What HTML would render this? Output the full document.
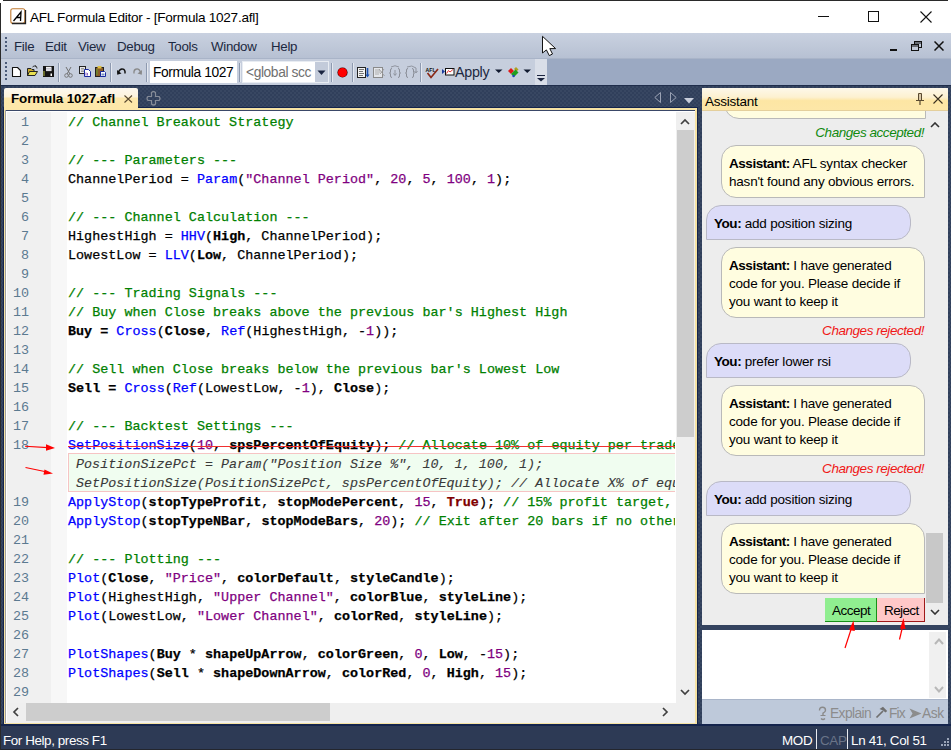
<!DOCTYPE html>
<html><head><meta charset="utf-8">
<style>
*{box-sizing:border-box;margin:0;padding:0}
html,body{width:951px;height:750px;overflow:hidden;background:#34435f conic-gradient(#384762 25%,#303f5b 0 50%,#384762 0 75%,#303f5b 0) 0 0/4px 4px;font-family:"Liberation Sans",sans-serif}
.a{position:absolute}
.t{position:absolute;white-space:pre;line-height:1}
#title{left:0;top:0;width:951px;height:33px;background:#fff}
#menubar{left:0;top:33px;width:951px;height:26px;background:linear-gradient(#c9d1e0,#b6c0d2)}
#toolrow{left:0;top:59px;width:951px;height:26px;background:#9ba9c2}
#toolbar{left:1px;top:59px;width:546px;height:26px;background:#c6cedd}
.sep{position:absolute;top:63px;width:1px;height:19px;background:#8e9ab0;box-shadow:1px 0 0 #e4e8f0}
.code{position:absolute;left:1px;font-family:"Liberation Mono",monospace;font-size:13.4px;letter-spacing:0.02px;-webkit-text-stroke:0.25px currentColor;line-height:19px;white-space:pre;color:#000}
.ln{position:absolute;left:6px;width:23px;text-align:right;font-family:"Liberation Mono",monospace;font-size:13.4px;line-height:19px;color:#5b7a90}
.c{color:#008000}.f{color:#0000ff}.n{color:#800080}.b{font-weight:bold}.k{color:#800000;font-weight:bold}
.bub{position:absolute;font-size:13.5px;letter-spacing:-0.2px;line-height:18px;color:#000;padding:9px 0 0 7px}
.bub b{letter-spacing:-0.45px}
.ya{left:721px;width:204px;background:#fffde0;border:1px solid #b9b9b9;border-radius:15px 15px 0 15px}
.yu{left:706px;width:205px;background:#dcdcf8;border:1px solid #b9b9c6;border-radius:15px 15px 15px 0}
.st{position:absolute;right:27px;font-size:13.5px;letter-spacing:-0.45px;font-style:italic;white-space:pre;line-height:1}
</style></head><body>
<!-- window frame -->
<div id="title" class="a"></div>
<!-- app icon -->
<svg class="a" style="left:10px;top:8px" width="17" height="17"><rect x="0.8" y="0.8" width="14" height="14.5" rx="2" fill="#fff" stroke="#c07a30" stroke-width="1.1"/><path d="M2 15.5H15.5V2" fill="none" stroke="#222" stroke-width="1.3"/><path d="M3.5 13L11 4L10.5 13M6 9.5H11" fill="none" stroke="#000" stroke-width="1.3"/></svg>
<div class="t" style="left:30px;top:10.5px;font-size:13.6px;letter-spacing:-0.27px;color:#000">AFL Formula Editor - [Formula 1027.afl]</div>
<!-- window buttons -->
<div class="a" style="left:818px;top:16px;width:11px;height:1px;background:#111"></div>
<div class="a" style="left:868px;top:11px;width:11px;height:11px;border:1px solid #111"></div>
<svg class="a" style="left:920px;top:11px" width="12" height="12"><path d="M0.5 0.5L11.5 11.5M11.5 0.5L0.5 11.5" stroke="#111" stroke-width="1.1"/></svg>

<!-- menubar -->
<div id="menubar" class="a"></div>
<div class="a" style="left:1px;top:58px;width:950px;height:1px;background:#a9b4c8"></div>
<div class="t" style="left:14px;top:40px;font-size:13.3px;letter-spacing:-0.3px;color:#1c2840">File</div>
<div class="t" style="left:45px;top:40px;font-size:13.3px;letter-spacing:-0.3px;color:#1c2840">Edit</div>
<div class="t" style="left:78px;top:40px;font-size:13.3px;letter-spacing:-0.3px;color:#1c2840">View</div>
<div class="t" style="left:117px;top:40px;font-size:13.3px;letter-spacing:-0.3px;color:#1c2840">Debug</div>
<div class="t" style="left:168px;top:40px;font-size:13.3px;letter-spacing:-0.3px;color:#1c2840">Tools</div>
<div class="t" style="left:211px;top:40px;font-size:13.3px;letter-spacing:-0.3px;color:#1c2840">Window</div>
<div class="t" style="left:271px;top:40px;font-size:13.3px;letter-spacing:-0.3px;color:#1c2840">Help</div>

<!-- toolbar -->
<div id="toolrow" class="a"></div>
<div id="toolbar" class="a"></div>
<div class="a" style="left:0;top:85px;width:951px;height:1px;background:#1f2d4b"></div>

<!-- grippers -->
<div class="a" style="left:5px;top:37px;width:2px;height:16px;background:repeating-linear-gradient(#4a5a78 0 2px,transparent 2px 4px)"></div>
<div class="a" style="left:5px;top:62px;width:2px;height:18px;background:repeating-linear-gradient(#4a5a78 0 2px,transparent 2px 4px)"></div>
<!-- new -->
<svg class="a" style="left:0;top:56px" width="560" height="30">
<path d="M12.5 11.5H17.5L20.5 14.5V20.5H12.5Z" fill="#fff" stroke="#111" stroke-width="1.1" stroke-linejoin="round"/>
<!-- open -->
<path d="M27.5 12.5H31L32 13.5H34V19.5H27.5Z" fill="#c8a830" stroke="#222"/>
<path d="M27.5 19.5L29.5 15.5H37.5L35 19.5Z" fill="#e8e050" stroke="#222"/>
<path d="M32.5 11Q34 9 36 10.5M35 9.5L36.5 10.5L37 12.5" fill="none" stroke="#333" stroke-width="1"/>
<!-- save -->
<rect x="43" y="10" width="11" height="11" fill="#151515"/>
<rect x="46" y="10.8" width="5.5" height="4.3" fill="#f4f4f4"/>
<path d="M46 12.5H51.5M46 14H51.5" stroke="#aab" stroke-width="0.6"/>
<rect x="43.5" y="15" width="1" height="5" fill="#b8c040"/>
<rect x="50.5" y="17.5" width="1.5" height="2.5" fill="#fff"/>
<!-- cut -->
<path d="M66 11L70 18M71 11L67 18" stroke="#707070" stroke-width="1"/>
<circle cx="66.5" cy="19.5" r="1.8" fill="none" stroke="#707070" stroke-width="0.9"/>
<circle cx="70.5" cy="19.5" r="1.8" fill="none" stroke="#707070" stroke-width="0.9"/>
<!-- copy -->
<rect x="79.5" y="10.5" width="6" height="7" fill="#e8e8e8" stroke="#222"/>
<path d="M81 12.5H84M81 14H84M81 15.5H84" stroke="#666" stroke-width="0.6"/>
<path d="M84.5 13.5H88.5L90.5 15.5V20.5H84.5Z" fill="#fff" stroke="#1a2aa0"/>
<path d="M86 16.5V19.5M87.5 17V19.5" stroke="#7040b0" stroke-width="0.8"/>
<!-- paste -->
<rect x="95.5" y="11.5" width="8" height="9" fill="#8a5a28" stroke="#222"/>
<rect x="97.5" y="10" width="4" height="2.5" fill="#e0c040"/>
<rect x="96.5" y="13" width="1" height="6" fill="#60a030"/>
<path d="M100.5 15.5H104.5L105.5 16.5V20.5H100.5Z" fill="#fff" stroke="#1a2aa0"/>
<rect x="101.5" y="17.5" width="3" height="2" fill="#7890c0"/>
<!-- undo -->
<path d="M118.5 16Q120 12.5 122.5 13Q125.5 13.5 125 17.5" fill="none" stroke="#111" stroke-width="1.5"/>
<path d="M117 14L117.2 18.8L121.5 17.6Z" fill="#111"/>
<!-- redo -->
<path d="M140.5 16Q139 12.5 136.5 13Q133.5 13.5 134 17.5" fill="none" stroke="#888" stroke-width="1.3"/>
<path d="M142 14L141.8 18.8L137.5 17.6Z" fill="#888"/>
</svg>
<div class="sep" style="left:58px"></div>
<div class="sep" style="left:110px"></div>
<div class="sep" style="left:146px"></div>
<!-- formula combo -->
<div class="a" style="left:150px;top:61px;width:87px;height:22px;background:#fff"></div>
<div class="t" style="left:153px;top:66px;font-size:13.8px;letter-spacing:-0.4px;color:#000">Formula 1027</div>
<div class="sep" style="left:239px"></div>
<div class="a" style="left:242px;top:61px;width:87px;height:22px;background:#fff;border:1px solid #e8ecf2"></div>
<div class="t" style="left:246px;top:66px;font-size:13.8px;letter-spacing:-0.4px;color:#707070">&lt;global scc</div>
<div class="a" style="left:315px;top:62px;width:13px;height:20px;background:#c3cbda"></div>
<svg class="a" style="left:317px;top:70px" width="9" height="6"><path d="M0.5 0.5H8.5L4.5 5Z" fill="#1a2440"/></svg>
<div class="sep" style="left:331px"></div>
<div class="a" style="left:337.5px;top:68px;width:9px;height:9px;border-radius:50%;background:#f00;box-shadow:0 0 0 0.6px #400"></div>
<div class="sep" style="left:352px"></div>
<svg class="a" style="left:350px;top:56px" width="220" height="30">
<!-- debug icon 1 -->
<rect x="7.5" y="11.5" width="8" height="10" fill="#f4f4f4" stroke="#222"/>
<path d="M9 13.5H14M9 15.5H13M9 17.5H14M9 19.5H13" stroke="#555" stroke-width="0.8"/>
<path d="M17.5 12V20" stroke="#1a50b0" stroke-width="1.6"/><path d="M15.5 18.5H19.5L17.5 21.5Z" fill="#1a50b0"/>
<!-- debug icon 2 -->
<rect x="23.5" y="11.5" width="9" height="10" fill="#e4e6ea" stroke="#8a8a8a"/>
<path d="M25 14H30M25 16H30M25 18H29" stroke="#a0a0a0" stroke-width="0.8"/>
<path d="M29 13L34.5 20M34 13L30 18" stroke="#9a9a9a" stroke-width="0.9"/>
<!-- braces 1 -->
<path d="M42 12.5Q40.5 12.5 40.5 14V16Q40.5 17 39.5 17Q40.5 17 40.5 18V20Q40.5 21.5 42 21.5M48 12.5Q49.5 12.5 49.5 14V16Q49.5 17 50.5 17Q49.5 17 49.5 18V20Q49.5 21.5 48 21.5" fill="none" stroke="#8a8e98" stroke-width="1"/>
<path d="M45 14V19M43.5 17.5L45 19.5L46.5 17.5" fill="none" stroke="#8a8e98" stroke-width="0.9"/>
<path d="M41 11Q45 8.5 49 11" fill="none" stroke="#8a8e98" stroke-width="0.9"/>
<!-- braces 2 -->
<path d="M58 12.5Q56.5 12.5 56.5 14V16Q56.5 17 55.5 17Q56.5 17 56.5 18V20Q56.5 21.5 58 21.5M62 12.5Q63.5 12.5 63.5 14V16Q63.5 17 64.5 17Q63.5 17 63.5 18V20Q63.5 21.5 62 21.5" fill="none" stroke="#8a8e98" stroke-width="1"/>
<path d="M57 11Q62 8.5 66 12V16M64.5 15L66 17L67.5 15" fill="none" stroke="#8a8e98" stroke-width="0.9"/>
<!-- AFL check -->
<text x="75.5" y="15.5" font-family="Liberation Sans" font-size="5.2" font-weight="bold" fill="#111">AFL</text>
<path d="M77.5 17L81 21.5L88 13" fill="none" stroke="#8a2a18" stroke-width="1.7"/>
<!-- apply icon -->
<path d="M92 13L95 15.5L92 18Z" fill="#1a3aa0"/>
<rect x="95.5" y="12.5" width="8.5" height="6.5" fill="#fff" stroke="#111"/>
<path d="M96.5 17.5L98.5 14.5L100 16L103 13.5" fill="none" stroke="#e02020" stroke-width="0.9"/>
<!-- dropdown 1 -->
<path d="M145 13.5H152.5L148.75 17Z" fill="#111a30"/>
<!-- color icon -->
<path d="M158 15L161 12L164 15L161 18Z" fill="#e01818"/>
<path d="M164 13L166 11L168.5 13.5L166.5 15.5Z" fill="#b0a020"/>
<path d="M161 18L165.5 13.5L168.5 16.5L164 21Z" fill="#20a020"/>
<circle cx="163.5" cy="20" r="1.2" fill="#2040c0"/>
<!-- dropdown 2 -->
<path d="M173.5 13.5H181L177.25 17Z" fill="#111a30"/>
</svg>
<div class="sep" style="left:420px"></div>
<div class="t" style="left:455px;top:64.5px;font-size:14.3px;letter-spacing:-0.3px;color:#1c2840">Apply</div>
<div class="a" style="left:535px;top:59px;width:12px;height:26px;background:#d9dee8"></div>
<svg class="a" style="left:537px;top:75px" width="8" height="7"><path d="M0 0.5H8" stroke="#1a2440"/><path d="M0 3H8L4 6.5Z" fill="#1a2440"/></svg>
<!-- MDI buttons -->
<div class="a" style="left:890px;top:49px;width:7px;height:2px;background:#111"></div>
<svg class="a" style="left:911px;top:41px" width="11" height="10"><rect x="3.5" y="0.5" width="7" height="6" fill="none" stroke="#111"/><rect x="0.5" y="3.5" width="7" height="6" fill="#c3cbda" stroke="#111"/><path d="M1 5H7M4 2H10" stroke="#111"/></svg>
<svg class="a" style="left:934px;top:41px" width="10" height="10"><path d="M0.5 0.5L9.5 9.5M9.5 0.5L0.5 9.5" stroke="#111" stroke-width="1.5"/></svg>
<!-- mouse cursor -->
<svg class="a" style="left:541px;top:35px" width="17" height="23"><path d="M1.5 1.3V18L5.4 14.9L8.3 20.6L11.5 19L8.8 13.6H14.6Z" fill="#fff" stroke="#111" stroke-width="1" stroke-linejoin="miter"/></svg>


<!-- tab nav -->
<svg class="a" style="left:654px;top:92px" width="8" height="11"><path d="M6.5 0.5V10.5L0.8 5.5Z" fill="none" stroke="#9aa2b4"/></svg>
<svg class="a" style="left:670px;top:92px" width="8" height="11"><path d="M0.5 0.5V10.5L6.2 5.5Z" fill="none" stroke="#9aa2b4"/></svg>
<svg class="a" style="left:684px;top:98px" width="10" height="6"><path d="M0 0H10L5 5.5Z" fill="#c8cedc"/></svg>
<!-- editor frame -->
<div class="a" style="left:3px;top:107px;width:695px;height:618px;background:#14244c"></div>
<div class="a" style="left:4px;top:108px;width:693px;height:616px;background:#f6e3a4"></div>
<div class="a" style="left:5px;top:110px;width:690px;height:613px;background:#fff"></div>
<div class="a" style="left:5px;top:110px;width:690px;height:1px;background:#3a4868"></div>
<div class="a" style="left:5px;top:110px;width:1px;height:613px;background:#a0a0a0"></div>
<div class="a" style="left:7px;top:112px;width:44px;height:591px;background:#f0f0f0"></div>
<div class="a" style="left:51px;top:112px;width:16px;height:591px;background:#f7f7f7"></div>
<!-- tab -->
<div class="a" style="left:4px;top:88px;width:134px;height:22px;background:linear-gradient(#fdf8ee,#fdf3dc 40%,#fde8ac 46%,#fde7a8);border-radius:2px 2px 0 0"></div>
<div class="t" style="left:11px;top:92px;font-size:13.4px;font-weight:bold;letter-spacing:-0.1px;color:#000">Formula 1027.afl</div>
<svg class="a" style="left:124px;top:95px" width="9" height="8"><path d="M0.5 0.5L8 7.5M8 0.5L0.5 7.5" stroke="#5a4a30" stroke-width="1.1"/></svg>
<svg class="a" style="left:146px;top:91px" width="15" height="15"><path d="M5.5 1.5Q7.5 -0.5 9.5 1.5V5.5H13Q15 7.5 13 9.5H9.5V13Q7.5 15 5.5 13V9.5H2Q0 7.5 2 5.5H5.5Z" fill="none" stroke="#868c98" stroke-width="1.2"/></svg>
<div class="ln" style="top:113px">1</div><div class="ln" style="top:132px">2</div><div class="ln" style="top:151px">3</div><div class="ln" style="top:170px">4</div><div class="ln" style="top:189px">5</div><div class="ln" style="top:208px">6</div><div class="ln" style="top:227px">7</div><div class="ln" style="top:246px">8</div><div class="ln" style="top:265px">9</div><div class="ln" style="top:284px">10</div><div class="ln" style="top:303px">11</div><div class="ln" style="top:322px">12</div><div class="ln" style="top:341px">13</div><div class="ln" style="top:360px">14</div><div class="ln" style="top:379px">15</div><div class="ln" style="top:398px">16</div><div class="ln" style="top:417px">17</div><div class="ln" style="top:436px">18</div><div class="ln" style="top:493px">19</div><div class="ln" style="top:512px">20</div><div class="ln" style="top:531px">21</div><div class="ln" style="top:550px">22</div><div class="ln" style="top:569px">23</div><div class="ln" style="top:588px">24</div><div class="ln" style="top:607px">25</div><div class="ln" style="top:626px">26</div><div class="ln" style="top:645px">27</div><div class="ln" style="top:664px">28</div><div class="ln" style="top:683px">29</div>
<div class="a" style="left:67px;top:112px;width:608px;height:591px;overflow:hidden">
<div class="code" style="top:1px"><span class="c">// Channel Breakout Strategy</span></div>
<div class="code" style="top:20px"></div>
<div class="code" style="top:39px"><span class="c">// --- Parameters ---</span></div>
<div class="code" style="top:58px">ChannelPeriod = <span class="f">Param</span>(<span class="n">"Channel Period"</span>, <span class="n">20</span>, <span class="n">5</span>, <span class="n">100</span>, <span class="n">1</span>);</div>
<div class="code" style="top:77px"></div>
<div class="code" style="top:96px"><span class="c">// --- Channel Calculation ---</span></div>
<div class="code" style="top:115px">HighestHigh = <span class="f">HHV</span>(<span class="b">High</span>, ChannelPeriod);</div>
<div class="code" style="top:134px">LowestLow = <span class="f">LLV</span>(<span class="b">Low</span>, ChannelPeriod);</div>
<div class="code" style="top:153px"></div>
<div class="code" style="top:172px"><span class="c">// --- Trading Signals ---</span></div>
<div class="code" style="top:191px"><span class="c">// Buy when Close breaks above the previous bar's Highest High</span></div>
<div class="code" style="top:210px"><span class="b">Buy =</span> <span class="f">Cross</span>(<span class="b">Close</span>, <span class="f">Ref</span>(HighestHigh, -<span class="n">1</span>));</div>
<div class="code" style="top:229px"></div>
<div class="code" style="top:248px"><span class="c">// Sell when Close breaks below the previous bar's Lowest Low</span></div>
<div class="code" style="top:267px"><span class="b">Sell =</span> <span class="f">Cross</span>(<span class="f">Ref</span>(LowestLow, -<span class="n">1</span>), <span class="b">Close</span>);</div>
<div class="code" style="top:286px"></div>
<div class="code" style="top:305px"><span class="c">// --- Backtest Settings ---</span></div>
<div class="code" style="top:324px"><span class="f">SetPositionSize</span>(<span class="n">10</span>, <span class="b">spsPercentOfEquity</span>); <span class="c">// Allocate 10% of equity per trade</span></div>
<div class="code" style="top:381px"><span class="f">ApplyStop</span>(<span class="b">stopTypeProfit</span>, <span class="b">stopModePercent</span>, <span class="n">15</span>, <span class="k">True</span>); <span class="c">// 15% profit target, then more</span></div>
<div class="code" style="top:400px"><span class="f">ApplyStop</span>(<span class="b">stopTypeNBar</span>, <span class="b">stopModeBars</span>, <span class="n">20</span>); <span class="c">// Exit after 20 bars if no other exit</span></div>
<div class="code" style="top:419px"></div>
<div class="code" style="top:438px"><span class="c">// --- Plotting ---</span></div>
<div class="code" style="top:457px"><span class="f">Plot</span>(<span class="b">Close</span>, <span class="n">"Price"</span>, <span class="b">colorDefault</span>, <span class="b">styleCandle</span>);</div>
<div class="code" style="top:476px"><span class="f">Plot</span>(HighestHigh, <span class="n">"Upper Channel"</span>, <span class="b">colorBlue</span>, <span class="b">styleLine</span>);</div>
<div class="code" style="top:495px"><span class="f">Plot</span>(LowestLow, <span class="n">"Lower Channel"</span>, <span class="b">colorRed</span>, <span class="b">styleLine</span>);</div>
<div class="code" style="top:514px"></div>
<div class="code" style="top:533px"><span class="f">PlotShapes</span>(<span class="b">Buy</span> * <span class="b">shapeUpArrow</span>, <span class="b">colorGreen</span>, <span class="n">0</span>, <span class="b">Low</span>, -<span class="n">15</span>);</div>
<div class="code" style="top:552px"><span class="f">PlotShapes</span>(<span class="b">Sell</span> * <span class="b">shapeDownArrow</span>, <span class="b">colorRed</span>, <span class="n">0</span>, <span class="b">High</span>, <span class="n">15</span>);</div>
<div class="code" style="top:571px"></div>

<div class="a" style="left:1px;top:341px;width:620px;height:39px;background:#f0fdf0;border:1px solid #f6c4c4"></div>
<div class="code" style="left:9px;top:343px;color:#3a3a3a;font-style:italic;-webkit-text-stroke:0.1px currentColor">PositionSizePct = Param("Position Size %", 10, 1, 100, 1);</div>
<div class="code" style="left:9px;top:362px;color:#3a3a3a;font-style:italic;-webkit-text-stroke:0.1px currentColor">SetPositionSize(PositionSizePct, spsPercentOfEquity); // Allocate X% of equity</div>
<div class="a" style="left:1px;top:334px;width:620px;height:1px;background:#f03030"></div>

</div>
<!-- v scrollbar -->
<div class="a" style="left:676px;top:112px;width:19px;height:611px;background:#efefef"></div>
<div class="a" style="left:677px;top:130px;width:17px;height:307px;background:#cdcdcd"></div>
<svg class="a" style="left:680px;top:118px" width="10" height="7"><path d="M1 6L5 2L9 6" fill="none" stroke="#404040" stroke-width="1.7"/></svg>
<svg class="a" style="left:680px;top:689px" width="10" height="7"><path d="M1 1L5 5L9 1" fill="none" stroke="#404040" stroke-width="1.7"/></svg>
<!-- h scrollbar -->
<div class="a" style="left:7px;top:703px;width:669px;height:20px;background:#efefef"></div>
<div class="a" style="left:26px;top:703px;width:304px;height:18px;background:#cdcdcd"></div>
<svg class="a" style="left:12px;top:707px" width="7" height="10"><path d="M6 1L2 5L6 9" fill="none" stroke="#404040" stroke-width="1.7"/></svg>
<svg class="a" style="left:662px;top:707px" width="7" height="10"><path d="M1 1L5 5L1 9" fill="none" stroke="#404040" stroke-width="1.7"/></svg>
<!-- annotation arrows -->
<svg class="a" style="left:0;top:430px" width="70" height="60"><path d="M25 16.3L48 17.6" stroke="#f00" stroke-width="1.1"/><path d="M46 14.3L55 18L46 20.8Z" fill="#f00"/><path d="M25.5 37.5L47 42" stroke="#f00" stroke-width="1.1"/><path d="M44.5 39.5L53 43.6L43.5 44.8Z" fill="#f00"/></svg>
<!-- ASSISTANT PANEL -->
<div class="a" style="left:702px;top:88px;width:246px;height:636px;background:#ededed"></div>
<div class="a" style="left:702px;top:88px;width:246px;height:23px;background:linear-gradient(#fdf8ea,#fdf1d0 40%,#fde6a4 55%,#fde7a8);border-radius:3px 3px 0 0"></div>
<div class="a" style="left:702px;top:110px;width:246px;height:1px;background:#e4cf9c"></div>
<div class="t" style="left:705px;top:95px;font-size:13.5px;letter-spacing:-0.25px;color:#000">Assistant</div>
<svg class="a" style="left:915px;top:92px" width="10" height="14"><path d="M3.5 1.5H6.5V8.5H3.5Z" fill="#d8c8a8" stroke="#5a4a30"/><path d="M1 8.5H9M5 9V13" stroke="#5a4a30" stroke-width="1.2"/></svg>
<svg class="a" style="left:933px;top:94px" width="10" height="10"><path d="M0.5 0.5L9.5 9.5M9.5 0.5L0.5 9.5" stroke="#3a3020" stroke-width="1.1"/></svg>
<!-- chat clip -->
<div class="a" style="left:702px;top:111px;width:225px;height:514px;overflow:hidden">
 <div class="a" style="left:22px;top:-59px;width:202px;height:67px;background:#fffde0;border:1px solid #b9b9b9;border-radius:15px 15px 0 15px"></div>
</div>
<div class="st" style="top:126px;color:#108a10">Changes accepted!</div>
<div class="bub ya" style="top:145px;height:53px"><b>Assistant:</b> AFL syntax checker<br>hasn't found any obvious errors.</div>
<div class="bub yu" style="top:205px;height:35px"><b>You:</b> add position sizing</div>
<div class="bub ya" style="top:247px;height:71px"><b>Assistant:</b> I have generated<br>code for you. Please decide if<br>you want to keep it</div>
<div class="st" style="top:324px;color:#f01818">Changes rejected!</div>
<div class="bub yu" style="top:343px;height:35px"><b>You:</b> prefer lower rsi</div>
<div class="bub ya" style="top:385px;height:71px"><b>Assistant:</b> I have generated<br>code for you. Please decide if<br>you want to keep it</div>
<div class="st" style="top:462px;color:#f01818">Changes rejected!</div>
<div class="bub yu" style="top:481px;height:35px"><b>You:</b> add position sizing</div>
<div class="bub ya" style="top:523px;height:71px"><b>Assistant:</b> I have generated<br>code for you. Please decide if<br>you want to keep it</div>
<!-- buttons -->
<div class="a" style="left:825px;top:598px;width:52px;height:24px;background:#90ee90;border-right:1px solid #189018;border-bottom:1px solid #189018"></div>
<div class="t" style="left:832px;top:604px;font-size:13.5px;color:#000;letter-spacing:-0.5px">Accept</div>
<div class="a" style="left:877px;top:598px;width:48px;height:24px;background:#ffc8c8;border-right:1px solid #a01818;border-bottom:1px solid #a01818"></div>
<div class="t" style="left:884px;top:604px;font-size:13.5px;color:#000;letter-spacing:-0.6px">Reject</div>
<!-- chat scrollbar -->
<div class="a" style="left:927px;top:111px;width:19px;height:514px;background:#ededed"></div>
<div class="a" style="left:926px;top:533px;width:17px;height:70px;background:#c8c8c8"></div>
<svg class="a" style="left:930px;top:122px" width="10" height="6"><path d="M1 5L5 1L9 5" fill="none" stroke="#333" stroke-width="1.6"/></svg>
<svg class="a" style="left:930px;top:609px" width="10" height="6"><path d="M1 1L5 5L9 1" fill="none" stroke="#333" stroke-width="1.6"/></svg>
<!-- splitter -->
<div class="a" style="left:702px;top:625px;width:246px;height:5px;background:#34435f"></div>
<!-- input -->
<div class="a" style="left:702px;top:630px;width:246px;height:69px;background:#fff"></div>
<div class="a" style="left:929px;top:632px;width:17px;height:66px;background:#f0f0f0"></div>
<svg class="a" style="left:934px;top:638px" width="10" height="7"><path d="M1 6L5 1.5L9 6" fill="none" stroke="#b8b8b8" stroke-width="2"/></svg>
<svg class="a" style="left:934px;top:686px" width="10" height="7"><path d="M1 1L5 5.5L9 1" fill="none" stroke="#b8b8b8" stroke-width="2"/></svg>
<!-- bottom toolbar -->
<div class="a" style="left:702px;top:699px;width:246px;height:25px;background:#bec9da;border-top:1px solid #a9b5c9"></div>
<svg class="a" style="left:817px;top:706px" width="11" height="15"><path d="M2.5 4.5Q2.5 1.2 5.5 1.2Q8.5 1.2 8.5 4.2Q8.5 6.2 6 7.2V9.5" fill="none" stroke="#8a8a8a" stroke-width="1.4"/><path d="M3.5 9.5H8.5M4 12.5Q6 14.5 8 12.5" fill="none" stroke="#8a8a8a" stroke-width="1.2"/></svg>
<div class="t" style="left:830px;top:707px;font-size:13.8px;letter-spacing:-0.6px;color:#8c8c8c">Explain</div>
<svg class="a" style="left:875px;top:706px" width="13" height="13"><path d="M1.5 11.5L8 5" stroke="#707070" stroke-width="1.7"/><path d="M4.5 3L8 0.8L12.2 5L10.5 6.5L8 4.5Z" fill="#707070"/></svg>
<div class="t" style="left:889px;top:707px;font-size:13.8px;letter-spacing:-0.9px;color:#8c8c8c">Fix</div>
<svg class="a" style="left:909px;top:708px" width="13" height="11"><path d="M0.5 0.5L12.5 5.5L0.5 10.5L3.5 5.5Z" fill="#8c8c8c"/></svg>
<div class="t" style="left:922px;top:707px;font-size:13.8px;letter-spacing:-0.45px;color:#8c8c8c">Ask</div>
<!-- status bar -->
<div class="a" style="left:0;top:725px;width:951px;height:25px;background:#2d3a55"></div>
<div class="a" style="left:0;top:724px;width:951px;height:1.5px;background:#14244c"></div>
<div class="a" style="left:0;top:749px;width:951px;height:1px;background:#23262e"></div>
<div class="t" style="left:3px;top:734px;font-size:13.4px;letter-spacing:-0.4px;color:#fff">For Help, press F1</div>
<div class="t" style="left:782px;top:734px;font-size:13.4px;letter-spacing:-0.3px;color:#fff">MOD</div>
<div class="a" style="left:816px;top:729px;width:1px;height:20px;background:#e8eaf0"></div>
<div class="t" style="left:820px;top:734px;font-size:13.4px;letter-spacing:-0.3px;color:#6a7488">CAP</div>
<div class="a" style="left:847px;top:729px;width:1px;height:20px;background:#e8eaf0"></div>
<div class="t" style="left:851px;top:734px;font-size:13.4px;letter-spacing:-0.3px;color:#fff">Ln 41, Col 51</div>
<svg class="a" style="left:938px;top:737px" width="12" height="12"><g fill="#9aa4b8"><rect x="9" y="1" width="2" height="2"/><rect x="6" y="4" width="2" height="2"/><rect x="9" y="4" width="2" height="2"/><rect x="3" y="7" width="2" height="2"/><rect x="6" y="7" width="2" height="2"/><rect x="9" y="7" width="2" height="2"/></g></svg>
<!-- annotation arrows buttons -->
<svg class="a" style="left:830px;top:610px" width="90" height="45"><path d="M15 38L21.5 18" stroke="#f00" stroke-width="1.2"/><path d="M19 20L23.5 10.5L24.8 21Z" fill="#f00"/><path d="M69.5 29.5L72.5 17" stroke="#f00" stroke-width="1.2"/><path d="M70 18.5L73.5 8L75.5 19Z" fill="#f00"/></svg>
<div class="a" style="left:3px;top:0;width:945px;height:1px;background:#2a2a2a"></div>
<div class="a" style="left:0;top:3px;width:1px;height:747px;background:#2a2a2a"></div>
</body></html>
